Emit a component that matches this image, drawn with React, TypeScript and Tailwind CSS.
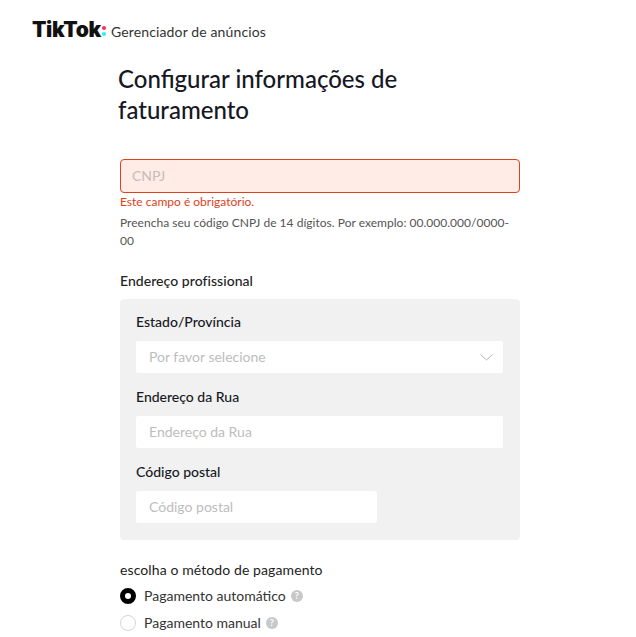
import React from 'react';

const font = { fontFamily: '"Lato", "Noto Sans", sans-serif' };

function Field({ label, placeholder, narrow, select }: { label: string; placeholder: string; narrow?: boolean; select?: boolean }) {
  return (
    <div>
      <div className="h-[18px] text-sm leading-[18px] font-medium text-[#161823]">{label}</div>
      <div className={`mt-[10px] h-8 pb-[1px] bg-white rounded-[2px] flex items-center justify-between pl-[13px] pr-[10px] ${narrow ? 'w-[241px]' : 'w-full'}`}>
        <span className="text-sm text-[#bdbdbd]">{placeholder}</span>
        {select && (
          <svg width="13" height="7" viewBox="0 0 13 7" fill="none" className="mt-[1px]">
            <path d="M0.5 0.5L6.5 6L12.5 0.5" stroke="#b4b4b4" strokeWidth="1" />
          </svg>
        )}
      </div>
    </div>
  );
}

function Help() {
  return (
    <span className="w-3 h-3 rounded-full bg-[#c8c8c8] text-white text-[9px] leading-3 font-bold text-center inline-block">?</span>
  );
}

export default function App() {
  return (
    <div className="h-[637px] overflow-hidden bg-white" style={font}>
      {/* Header */}
      <div className="pl-8 pt-[15px] flex items-center h-[43px]">
        <span className="text-[21px] font-black tracking-[-0.3px] text-[#111] leading-none" style={{ fontFamily: '"Inter", sans-serif' }}>TikTok</span>
        <span className="flex flex-col gap-[2px] ml-[1px] mt-[3px]">
          <span className="w-1 h-1 rounded-full bg-[#fe2c55]" />
          <span className="w-1 h-1 rounded-full bg-[#25f4ee]" />
        </span>
        <span className="ml-[5px] mt-[6px] text-sm tracking-[0.13px] text-[#333]">Gerenciador de anúncios</span>
      </div>

      <div className="ml-[120px] w-[400px]">
        <h1 className="-ml-[2px] mt-[20px] text-2xl leading-[31px] font-medium text-[#161823] w-[300px]">Configurar informações de faturamento</h1>

        {/* CNPJ */}
        <div className="mt-[34px] h-[34px] rounded-[4px] border border-[#e0411a] bg-[#ffece6] flex items-center px-[11px]">
          <span className="text-sm text-[#c4bdba]">CNPJ</span>
        </div>
        <p className="mt-[0px] text-xs leading-[18px] text-[#e0411a]">Este campo é obrigatório.</p>
        <p className="mt-[3px] text-xs leading-[18px] tracking-[0.02px] text-[#555]">Preencha seu código CNPJ de 14 dígitos. Por exemplo: 00.000.000/0000-00</p>

        <div className="mt-[22px] text-sm leading-[18px] font-medium tracking-[0.05px] text-[#222]">Endereço profissional</div>

        {/* Address */}
        <div className="mt-[9px] h-[241px] bg-[#f1f1f1] rounded-[4px] pt-[14px] pl-4 pr-[17px] flex flex-col gap-[15px]">
          <Field label="Estado/Província" placeholder="Por favor selecione" select />
          <Field label="Endereço da Rua" placeholder="Endereço da Rua" />
          <Field label="Código postal" placeholder="Código postal" narrow />
        </div>

        {/* Payment */}
        <div className="mt-[21px] text-sm leading-[18px] tracking-[0.1px] text-[#222]">escolha o método de pagamento</div>
        <div className="mt-[8px] flex items-center h-[18px] text-sm text-[#333]">
          <span className="w-4 h-4 rounded-full border-[5px] border-black bg-white" />
          <span className="ml-2">Pagamento automático</span>
          <span className="ml-[5px] flex"><Help /></span>
        </div>
        <div className="mt-[9px] flex items-center h-[18px] text-sm text-[#333]">
          <span className="w-4 h-4 rounded-full border border-[#d5d5d5] bg-white" />
          <span className="ml-2">Pagamento manual</span>
          <span className="ml-[5px] flex"><Help /></span>
        </div>
      </div>
    </div>
  );
}
